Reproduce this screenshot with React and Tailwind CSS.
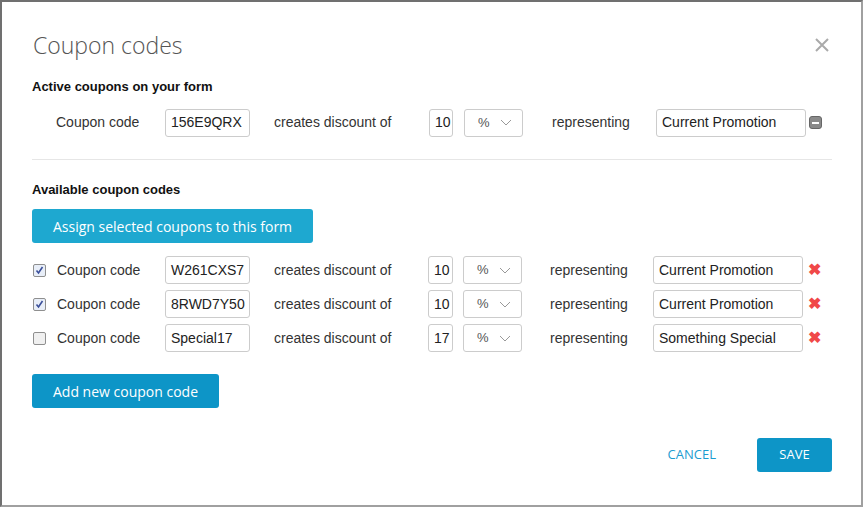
import React from "react";

const ff = { fontFamily: '"Liberation Sans", Arial, sans-serif' };

const Select = () => (
  <div className="flex items-center justify-between h-[28px] w-[59px] border border-[#ccc] rounded-[3px] pl-[13px] pr-[10px] text-[13px] text-[#555]">
    <span>%</span>
    <svg width="12" height="7" viewBox="0 0 12 7" fill="none" stroke="#999" strokeWidth="1"><path d="M1 1l5 5 5-5" /></svg>
  </div>
);

const Input = ({ w, children }) => (
  <div className={`h-[28px] ${w} border border-[#ccc] rounded-[3px] px-[5px] flex items-center text-[14px] text-[#222] whitespace-nowrap overflow-hidden`}>
    {children}
  </div>
);

const Row = ({ checked, code, pct, label }) => (
  <div className="flex items-center h-[28px] text-[14px] text-[#333]" style={ff}>
    <div className={`w-[13px] h-[13px] border border-[#8f8f8f] rounded-[2px] flex items-center justify-center ${checked ? "bg-[#e8eef8]" : "bg-[#f0f0f0]"}`}>
      {checked && <svg width="9" height="9" viewBox="0 0 9 9"><path d="M1.5 4.5l2 2.5 4-6" fill="none" stroke="#3a4f9a" strokeWidth="1.6" /></svg>}
    </div>
    <span className="ml-[11px] w-[108px]">Coupon code</span>
    <Input w="w-[85px]">{code}</Input>
    <span className="ml-[24px] w-[154px]">creates discount of</span>
    <Input w="w-[25px]">{pct}</Input>
    <div className="ml-[10px]"><Select /></div>
    <span className="ml-[28px] w-[103px]">representing</span>
    <Input w="w-[150px]">{label}</Input>
    <span className="ml-[5px] text-[#f04848] font-bold text-[16px] leading-none">✖</span>
  </div>
);

export default function App() {
  return (
    <div className="w-[863px] h-[507px] bg-white border-2 border-[#707070] border-r-[#a0a0a0] border-b-[#a0a0a0] relative" style={{ fontFamily: '"Open Sans", sans-serif' }}>
      <div className="flex items-center justify-between pl-[31px] pr-[31px] pt-[28px]">
        <h1 className="text-[23px] font-light text-[#555] leading-[30px]">Coupon codes</h1>
        <svg width="16" height="16" viewBox="0 0 16 16" stroke="#aaa" strokeWidth="2"><path d="M2 2l12 12M14 2L2 14" /></svg>
      </div>
      <div className="px-[30px]">
        <h2 className="mt-[17px] text-[13px] font-bold text-[#111]" style={ff}>Active coupons on your form</h2>
        <div className="flex items-center h-[28px] mt-[12px] pl-[24px] text-[14px] text-[#333]" style={ff}>
          <span className="w-[109px]">Coupon code</span>
          <Input w="w-[85px]">156E9QRX</Input>
          <span className="ml-[24px] w-[155px]">creates discount of</span>
          <Input w="w-[24px]">10</Input>
          <div className="ml-[11px]"><Select /></div>
          <span className="ml-[29px] w-[104px]">representing</span>
          <Input w="w-[150px]">Current Promotion</Input>
          <div className="ml-[3px] w-[13px] h-[13px] rounded-[3px] bg-[#8a8a8a] border border-[#666] flex items-center justify-center">
            <div className="w-[7px] h-[2px] bg-white" />
          </div>
        </div>
        <div className="mt-[22px] border-t border-[#e6e6e6] w-[800px]" />
        <h2 className="mt-[20px] text-[13px] font-bold text-[#111]" style={ff}>Available coupon codes</h2>
        <button className="mt-[10px] h-[34px] w-[281px] rounded-[3px] bg-[#1ea8d0] text-white text-[14px]">Assign selected coupons to this form</button>
        <div className="mt-[13px] flex flex-col gap-[6px] pl-[1px]">
          <Row checked code="W261CXS7" pct="10" label="Current Promotion" />
          <Row checked code="8RWD7Y50" pct="10" label="Current Promotion" />
          <Row code="Special17" pct="17" label="Something Special" />
        </div>
        <button className="mt-[22px] h-[34px] w-[187px] rounded-[3px] bg-[#0d95c7] text-white text-[14px]">Add new coupon code</button>
        <div className="mt-[30px] flex items-center justify-end gap-[41px] pr-0 w-[800px]">
          <span className="text-[#1b9cd0] text-[13px]">CANCEL</span>
          <button className="h-[34px] w-[75px] rounded-[3px] bg-[#0d95c7] text-white text-[13px]">SAVE</button>
        </div>
      </div>
    </div>
  );
}
